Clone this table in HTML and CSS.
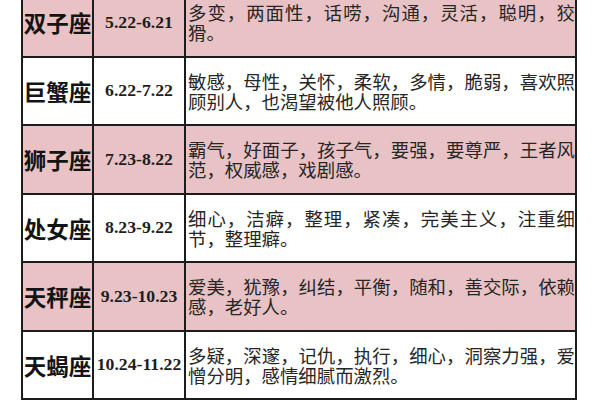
FILE: index.html
```html
<!DOCTYPE html>
<html lang="zh-CN">
<head>
<meta charset="utf-8">
<link rel="stylesheet" href="styles.css">
</head>
<body>
<div class="table">
  <div class="row pink">
    <div class="cell name">双子座</div>
    <div class="cell date">5.22-6.21</div>
    <div class="cell desc">多变，两面性，话唠，沟通，灵活，聪明，狡猾。</div>
  </div>
  <div class="row">
    <div class="cell name">巨蟹座</div>
    <div class="cell date">6.22-7.22</div>
    <div class="cell desc">敏感，母性，关怀，柔软，多情，脆弱，喜欢照顾别人，也渴望被他人照顾。</div>
  </div>
  <div class="row pink">
    <div class="cell name">狮子座</div>
    <div class="cell date">7.23-8.22</div>
    <div class="cell desc">霸气，好面子，孩子气，要强，要尊严，王者风范，权威感，戏剧感。</div>
  </div>
  <div class="row">
    <div class="cell name">处女座</div>
    <div class="cell date">8.23-9.22</div>
    <div class="cell desc">细心，洁癖，整理，紧凑，完美主义，注重细节，整理癖。</div>
  </div>
  <div class="row pink">
    <div class="cell name">天秤座</div>
    <div class="cell date">9.23-10.23</div>
    <div class="cell desc">爱美，犹豫，纠结，平衡，随和，善交际，依赖感，老好人。</div>
  </div>
  <div class="row">
    <div class="cell name">天蝎座</div>
    <div class="cell date">10.24-11.22</div>
    <div class="cell desc">多疑，深邃，记仇，执行，细心，洞察力强，爱憎分明，感情细腻而激烈。</div>
  </div>
</div>
</body>
</html>
```

FILE: styles.css
```css
html, body {
  margin: 0;
  padding: 0;
  background: #ffffff;
  width: 600px;
  height: 400px;
  overflow: hidden;
}

.table {
  margin: -13px 0 0 21px;
  width: 556px;
  border-left: 2px solid #1c1c1c;
  border-top: 2px solid #1c1c1c;
  box-sizing: border-box;
  display: flex;
  flex-direction: column;
}

.row {
  display: grid;
  grid-template-columns: 71px 92px 391px;
  height: 68.5px;
  background: #ffffff;
}

.row.pink {
  background: #e8c2c4;
}

.cell {
  border-right: 2px solid #1c1c1c;
  border-bottom: 2px solid #1c1c1c;
  display: flex;
  align-items: center;
  box-sizing: border-box;
  min-width: 0;
}

.name {
  justify-content: center;
  font-family: "Noto Sans CJK SC", sans-serif;
  font-weight: 700;
  font-size: 22.5px;
  color: #141414;
  white-space: nowrap;
}

.date {
  justify-content: center;
  font-family: "Liberation Serif", serif;
  font-weight: 700;
  font-size: 17.7px;
  color: #1e1e1e;
  white-space: nowrap;
}

.desc {
  padding: 0 0 0 2px;
  font-family: "Noto Sans CJK SC", sans-serif;
  font-size: 18.4px;
  line-height: 20px;
  color: #262626;
  text-align: justify;
}
```
